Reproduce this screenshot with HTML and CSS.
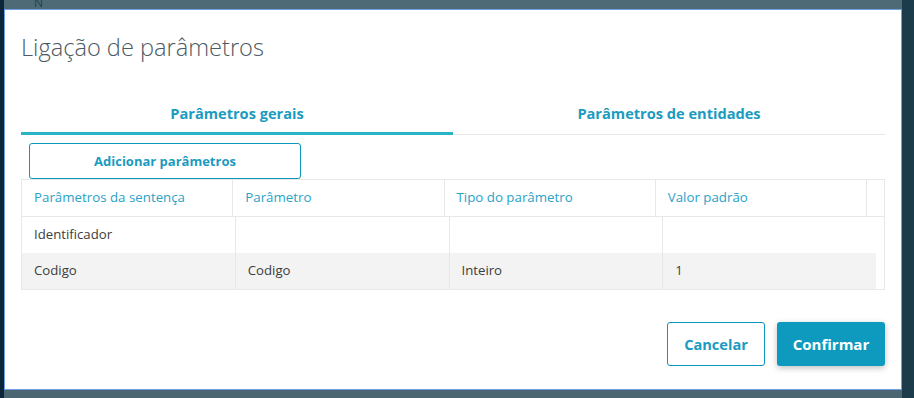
FILE: index.html
```html
<!DOCTYPE html>
<html lang="pt-BR">
<head>
  <meta charset="UTF-8" />
  <title>Ligação de parâmetros</title>
  <link rel="stylesheet" href="styles.css">
</head>
<body>
  <div class="backdrop">
    <div class="side-left"></div>
    <div class="middle">
      <div class="top-strip"><span class="ghost">N</span></div>
      <div class="modal">
        <h2 class="title">Ligação de parâmetros</h2>

        <div class="tabs">
          <div class="tab active">Parâmetros gerais</div>
          <div class="tab">Parâmetros de entidades</div>
        </div>

        <button class="btn-add">Adicionar parâmetros</button>

        <div class="grid">
          <div class="grid-head">
            <div class="cell">Parâmetros da sentença</div>
            <div class="cell">Parâmetro</div>
            <div class="cell">Tipo do parâmetro</div>
            <div class="cell">Valor padrão</div>
            <div class="cell gutter"></div>
          </div>
          <div class="grid-body">
            <div class="row">
              <div class="cell">Identificador</div>
              <div class="cell"></div>
              <div class="cell"></div>
              <div class="cell"></div>
            </div>
            <div class="row odd">
              <div class="cell">Codigo</div>
              <div class="cell">Codigo</div>
              <div class="cell">Inteiro</div>
              <div class="cell">1</div>
            </div>
          </div>
        </div>

        <div class="footer">
          <button class="btn-cancel">Cancelar</button>
          <button class="btn-ok">Confirmar</button>
        </div>
      </div>
      <div class="bottom-strip"></div>
    </div>
    <div class="side-right"></div>
  </div>
</body>
</html>
```

FILE: styles.css
```css
body {
  margin: 0;
  font-family: "Open Sans", Lato, sans-serif;
  background: #4c6673;
}
.backdrop {
  display: flex;
  height: 398px;
  overflow: hidden;
}
.side-left {
  width: 4px;
  background: #0b2638;
}
.side-right {
  width: 12px;
  background: #1c3b4b;
}
.middle {
  width: 898px;
  display: flex;
  flex-direction: column;
}
.top-strip {
  height: 9px;
  background: #4f6a77;
  overflow: hidden;
}
.ghost {
  display: block;
  margin: -6px 0 0 30px;
  font-size: 12px;
  color: #22404f;
}
.bottom-strip {
  flex: 1;
  background: #4b6571;
}
.modal {
  height: 379px;
  background: #fff;
  border: 1px solid #6f9fe6;
  padding: 0 16px 0 16px;
}
.title {
  margin: 23px 0 0 0;
  font-size: 23.6px;
  font-weight: 300;
  color: #4d5a61;
  line-height: 28px;
}
.tabs {
  display: flex;
  margin-top: 38px;
  border-bottom: 1px solid #e6e6e6;
}
.tab {
  flex: 1;
  text-align: center;
  font-size: 14.6px;
  font-weight: bold;
  color: #1b9bc0;
  height: 35px;
  line-height: 29px;
}
.tab.active {
  border-bottom: 3px solid #29b5c6;
  height: 33px;
  margin-bottom: -1px;
}
.btn-add {
  display: block;
  margin: 8px 0 0 8px;
  width: 272px;
  height: 36px;
  background: #fff;
  border: 1px solid #0c97bc;
  border-radius: 3px;
  color: #1b9bc0;
  font-family: inherit;
  font-size: 13px;
  font-weight: bold;
}
.grid {
  border: 1px solid #e8e8e8;
}
.grid-head {
  display: flex;
  height: 36px;
  border-bottom: 1px solid #e8e8e8;
}
.grid-head .cell {
  flex: 1;
  color: #2aa2c8;
  font-size: 13.3px;
  line-height: 35px;
  padding-left: 12px;
  border-right: 1px solid #e8e8e8;
}
.grid-head .gutter {
  flex: 0 0 17px;
  padding: 0;
  border-right: none;
}
.grid-body {
  margin-right: 8px;
}
.row {
  display: flex;
  height: 36px;
}
.row.odd {
  background: #f3f3f3;
}
.row .cell {
  flex: 1;
  font-size: 13.2px;
  color: #3c3c3c;
  line-height: 34px;
  padding-left: 12px;
  border-right: 1px solid #e8e8e8;
}
.row .cell:last-child {
  border-right: none;
}
.footer {
  display: flex;
  justify-content: flex-end;
  gap: 12px;
  margin-top: 32px;
}
.btn-cancel, .btn-ok {
  height: 44px;
  border-radius: 3px;
  font-family: inherit;
  font-weight: bold;
}
.btn-cancel {
  width: 98px;
  background: #fff;
  border: 1px solid #0c97bc;
  color: #1b9bc0;
  font-size: 14.6px;
}
.btn-ok {
  width: 108px;
  background: #0d9abe;
  border: none;
  color: #fff;
  font-size: 15px;
  box-shadow: 0 2px 6px rgba(0,0,0,0.25);
}
```
